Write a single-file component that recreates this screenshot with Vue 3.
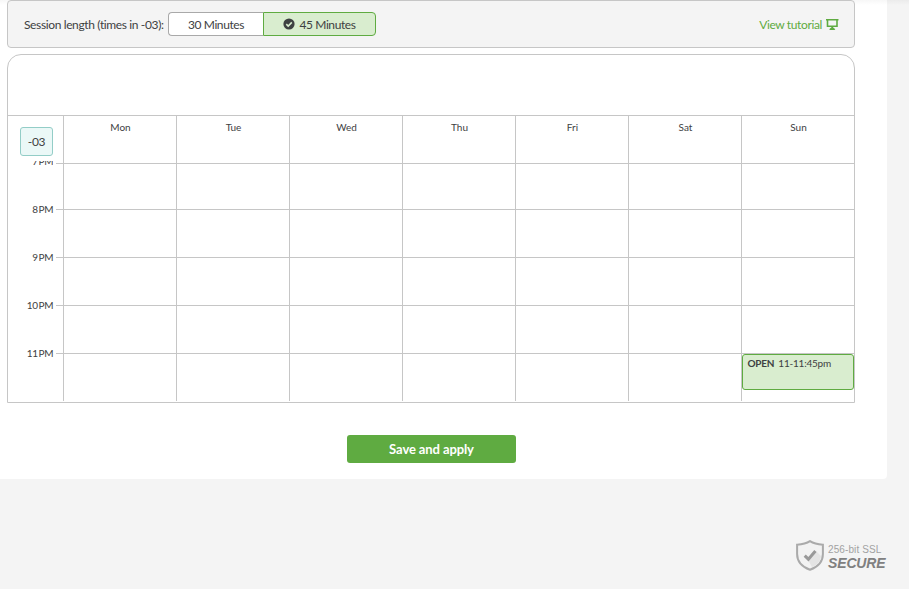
<script setup>
const days = ['Mon', 'Tue', 'Wed', 'Thu', 'Fri', 'Sat', 'Sun']
const hours = [
  { label: '7 PM', first: true },
  { label: '8 PM' },
  { label: '9 PM' },
  { label: '10 PM' },
  { label: '11 PM', last: true },
]
</script>

<template>
  <div class="page">
    <main class="panel">
      <section class="toolbar">
        <span class="toolbar-label">Session length (times in -03):</span>
        <div class="segmented">
          <button class="segment">30 Minutes</button>
          <button class="segment active">
            <svg class="check" viewBox="0 0 12 12">
              <circle cx="6" cy="6" r="5.6" fill="#3e4142" />
              <path d="M3.3 6.1 5.2 8 8.8 4.4" fill="none" stroke="#d9edcf" stroke-width="1.6" />
            </svg>
            <span>45 Minutes</span>
          </button>
        </div>
        <a class="tutorial">
          <span>View tutorial</span>
          <svg class="screen" viewBox="0 0 13 12">
            <path d="M0 1.800h12.500M1.500 2v6.200h9.500V2" fill="none" stroke="#5fab41" stroke-width="1.600" />
            <path d="M5.500 8.500h1.500v.8l2.300 1.900-.8.800H4l-.8-.8 2.300-1.900Z" fill="#5fab41" />
          </svg>
        </a>
      </section>

      <section class="calendar">
        <div class="calendar-top"></div>
        <div class="row head">
          <div class="axis"><span class="zone">-03</span></div>
          <div v-for="day in days" :key="day" class="cell">{{ day }}</div>
        </div>
        <div v-for="hour in hours" :key="hour.label" class="row hour" :class="{ first: hour.first, last: hour.last }">
          <div class="axis">
            <span class="time">{{ hour.label }}</span>
            <span class="tick"></span>
          </div>
          <div v-for="day in days" :key="day" class="cell">
            <div v-if="hour.last && day === 'Sun'" class="event"><b>OPEN</b><span>11-11:45pm</span></div>
          </div>
        </div>
      </section>

      <button class="save">Save and apply</button>
    </main>

    <footer class="secure">
      <svg class="shield" viewBox="0 0 28 31">
        <path d="M14 1.100C10.500 3.300 6 4.300 1.100 4.700V14c0 8 5.200 13 12.900 15.800C21.700 27 26.900 22 26.900 14V4.700C22 4.300 17.500 3.300 14 1.100Z" fill="#f2f2f2" stroke="#aaa" stroke-width="2" />
        <path d="m12 20 8-9 5 5c-.5 6-4 9-9 11Z" fill="#e4e4e4" />
        <path d="m8.700 15.600 3.700 3.600 7-8.200" fill="none" stroke="#999" stroke-width="3" />
      </svg>
      <div class="secure-text">
        <span class="bits">256-bit SSL</span>
        <span class="word">SECURE</span>
      </div>
    </footer>
  </div>
</template>

<style>
body {
  background: #f4f4f4;
}
</style>

<style scoped>
* {
  box-sizing: border-box;
}
.page {
  height: 589px;
  overflow: hidden;
  background: linear-gradient(#ebebeb, #f4f4f4 5px);
  font-family: Lato, "Liberation Sans", sans-serif;
  color: #3e4142;
}
.panel {
  width: 887px;
  height: 479px;
  padding-left: 7px;
  background: linear-gradient(#f7f7f7, #fff 5px);
  border-radius: 0 0 4px 0;
}
button {
  margin: 0;
  padding: 0;
  font-family: inherit;
  color: inherit;
}
.toolbar {
  display: flex;
  align-items: center;
  width: 848px;
  height: 48px;
  padding: 0 15px 0 16px;
  background: #f4f4f4;
  border: 1px solid #c6c6c6;
  border-radius: 4px;
  font-size: 12px;
  letter-spacing: -0.37px;
}
.toolbar-label {
  width: 144px;
  white-space: nowrap;
}
.segmented {
  display: flex;
}
.segment {
  display: flex;
  align-items: center;
  justify-content: center;
  gap: 4px;
  width: 95px;
  height: 24px;
  background: #fff;
  border: 1px solid #a9a9a9;
  border-right: 0;
  border-radius: 4px 0 0 4px;
  font-size: 12px;
  letter-spacing: -0.4px;
}
.segment.active {
  width: 113px;
  background: #d9edcf;
  border: 1px solid #5fab41;
  border-radius: 0 4px 4px 0;
}
.check {
  width: 12px;
  height: 12px;
}
.tutorial {
  display: flex;
  align-items: center;
  gap: 4px;
  margin-left: auto;
  color: #5fab41;
}
.screen {
  width: 13px;
  height: 12px;
}
.calendar {
  width: 848px;
  height: 349px;
  margin-top: 6px;
  border: 1px solid #c6c6c6;
  border-radius: 14px 14px 0 0;
}
.calendar-top {
  height: 60px;
}
.row {
  display: grid;
  grid-template-columns: 55px repeat(7, 113px);
  height: 48px;
}
.cell {
  border-top: 1px solid #c6c6c6;
  border-left: 1px solid #c6c6c6;
}
.head .axis {
  border-top: 1px solid #c6c6c6;
  padding: 11px 0 0 12px;
}
.head .cell {
  padding: 4px 0 0 1px;
  font-size: 10px;
  line-height: 14px;
  text-align: center;
}
.zone {
  display: flex;
  align-items: center;
  justify-content: center;
  width: 33px;
  height: 29px;
  background: #ebf8f7;
  border: 1px solid #93cdc7;
  border-radius: 3px;
  font-size: 12px;
  letter-spacing: -0.3px;
}
.hour .axis {
  display: flex;
  justify-content: flex-end;
  align-items: flex-start;
  gap: 3px;
}
.time {
  margin-top: -7px;
  font-size: 10px;
  line-height: 14px;
  letter-spacing: -0.45px;
  word-spacing: -1px;
  white-space: nowrap;
}
.tick {
  width: 7px;
  height: 1px;
  background: #c6c6c6;
}
.hour.first {
  height: 46px;
}
.hour.first .time {
  margin-top: -9px;
  clip-path: inset(7px 0 0 0);
}
.hour.last .cell {
  height: 48px;
}
.event {
  display: flex;
  gap: 4px;
  width: 112px;
  height: 36px;
  padding: 2px 4.5px;
  background: #d9edcf;
  border: 1px solid #5fab41;
  border-radius: 3px;
  font-size: 10px;
  line-height: 13px;
  letter-spacing: -0.22px;
}
.save {
  display: block;
  width: 169px;
  height: 28px;
  margin: 32px 0 0 340px;
  background: #5fab41;
  border: 0;
  border-radius: 3px;
  color: #fff;
  font-size: 13px;
  font-weight: 700;
  letter-spacing: -0.1px;
}
.secure {
  display: flex;
  width: 886px;
  margin-top: 61px;
  padding-left: 796px;
  gap: 4px;
}
.shield {
  flex: none;
  width: 28px;
  height: 31px;
}
.secure-text {
  display: flex;
  flex-direction: column;
  padding-top: 4px;
  font-family: "Liberation Sans", sans-serif;
  white-space: nowrap;
}
.bits {
  font-size: 10px;
  line-height: 12px;
  letter-spacing: 0.1px;
  color: #a2a2a2;
}
.word {
  font-size: 14px;
  line-height: 15px;
  letter-spacing: -0.15px;
  font-weight: 700;
  font-style: italic;
  color: #808080;
}
</style>
